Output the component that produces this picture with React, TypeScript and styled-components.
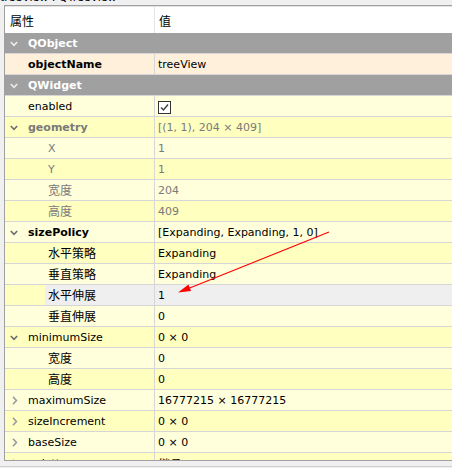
import React from "react";
import styled, { createGlobalStyle, css } from "styled-components";

const Global = createGlobalStyle`
  html, body { margin: 0; padding: 0; }
  body {
    background: #f0f0f0;
    font-family: "DejaVu Sans", "Noto Sans CJK SC", sans-serif;
    font-size: 11px;
    color: #000;
  }
`;

const LINE = "#d6d6d6";
const COLORS = {
  obj: { light: "#fff0dc", dark: "#ffe6bf" },
  widget: { light: "#ffffdc", dark: "#ffffc0" },
};

type Group = "obj" | "widget";
type Shade = "light" | "dark";

type CatRow = { kind: "cat"; label: string };
type PropRow = {
  kind: "prop";
  label: string;
  value?: string;
  level: number;
  group: Group;
  shade: Shade;
  bold?: boolean;
  gray?: boolean;
  expand?: "open" | "closed";
  hover?: boolean;
  checkbox?: boolean;
};
type RowData = CatRow | PropRow;

const rows: RowData[] = [
  { kind: "cat", label: "QObject" },
  { kind: "prop", label: "objectName", value: "treeView", level: 0, group: "obj", shade: "light", bold: true },
  { kind: "cat", label: "QWidget" },
  { kind: "prop", label: "enabled", level: 0, group: "widget", shade: "light", checkbox: true },
  { kind: "prop", label: "geometry", value: "[(1, 1), 204 × 409]", level: 0, group: "widget", shade: "dark", bold: true, gray: true, expand: "open" },
  { kind: "prop", label: "X", value: "1", level: 1, group: "widget", shade: "light", gray: true },
  { kind: "prop", label: "Y", value: "1", level: 1, group: "widget", shade: "dark", gray: true },
  { kind: "prop", label: "宽度", value: "204", level: 1, group: "widget", shade: "light", gray: true },
  { kind: "prop", label: "高度", value: "409", level: 1, group: "widget", shade: "dark", gray: true },
  { kind: "prop", label: "sizePolicy", value: "[Expanding, Expanding, 1, 0]", level: 0, group: "widget", shade: "light", bold: true, expand: "open" },
  { kind: "prop", label: "水平策略", value: "Expanding", level: 1, group: "widget", shade: "dark" },
  { kind: "prop", label: "垂直策略", value: "Expanding", level: 1, group: "widget", shade: "light" },
  { kind: "prop", label: "水平伸展", value: "1", level: 1, group: "widget", shade: "dark", hover: true },
  { kind: "prop", label: "垂直伸展", value: "0", level: 1, group: "widget", shade: "light" },
  { kind: "prop", label: "minimumSize", value: "0 × 0", level: 0, group: "widget", shade: "dark", expand: "open" },
  { kind: "prop", label: "宽度", value: "0", level: 1, group: "widget", shade: "light" },
  { kind: "prop", label: "高度", value: "0", level: 1, group: "widget", shade: "dark" },
  { kind: "prop", label: "maximumSize", value: "16777215 × 16777215", level: 0, group: "widget", shade: "light", expand: "closed" },
  { kind: "prop", label: "sizeIncrement", value: "0 × 0", level: 0, group: "widget", shade: "dark", expand: "closed" },
  { kind: "prop", label: "baseSize", value: "0 × 0", level: 0, group: "widget", shade: "light", expand: "closed" },
  { kind: "prop", label: "palette", value: "继承", level: 0, group: "widget", shade: "dark", expand: "closed" },
];

const Page = styled.div`
  position: relative;
  width: 452px;
  height: 468px;
  overflow: hidden;
  background: #f0f0f0;
`;

const Caption = styled.div`
  height: 5px;
  overflow: hidden;
`;

const CaptionText = styled.div`
  margin-top: -9px;
  line-height: 13px;
  white-space: nowrap;
`;

const Frame = styled.div`
  box-sizing: border-box;
  margin-left: 4px;
  height: 456px;
  border-top: 1px solid #a0a0a0;
  border-left: 1px solid #a0a0a0;
  border-bottom: 1px solid #a0a0a0;
  background: #fff;
  overflow: hidden;
`;

const Header = styled.div`
  display: flex;
  height: 26px;
  border-top: 1px solid #e3e3e3;
  background: #fff;
`;

const HeaderCell = styled.div<{ $first?: boolean }>`
  display: flex;
  align-items: center;
  box-sizing: border-box;
  padding-top: 1px;
  ${(p) =>
    p.$first
      ? css`
          width: 150px;
          padding-left: 5px;
          border-right: 1px solid #e5e5e5;
        `
      : css`
          flex: 1;
          padding-left: 4px;
        `}
`;

const Row = styled.div<{ $bg: string }>`
  display: flex;
  height: 20px;
  border-bottom: 1px solid ${LINE};
  background: ${(p) => p.$bg};
  white-space: nowrap;
`;

const NameCell = styled.div<{ $divider: boolean }>`
  display: flex;
  align-items: center;
  box-sizing: border-box;
  width: 150px;
  flex: none;
  height: 100%;
  ${(p) => p.$divider && css`border-right: 1px solid ${LINE};`}
`;

const Branch = styled.div<{ $width: number; $bg?: string }>`
  display: flex;
  align-items: center;
  width: ${(p) => p.$width}px;
  height: 100%;
  flex: none;
  padding: 1px 0 0 5px;
  box-sizing: border-box;
  background: ${(p) => p.$bg ?? "transparent"};
`;

const Label = styled.span<{ $bold?: boolean; $color: string }>`
  padding: 2px 0 0 3px;
  font-weight: ${(p) => (p.$bold ? 700 : 400)};
  color: ${(p) => p.$color};
  line-height: 18px;
`;

const ValueCell = styled.div<{ $color: string }>`
  display: flex;
  align-items: center;
  flex: 1;
  padding: 2px 0 0 3px;
  color: ${(p) => p.$color};
  line-height: 18px;
`;

const Cjk = styled.span`
  font-family: "Noto Sans CJK SC", sans-serif;
  font-size: 12px;
`;

const CheckBox = styled.span`
  box-sizing: border-box;
  display: inline-flex;
  align-items: center;
  justify-content: center;
  width: 13px;
  height: 13px;
  border: 1px solid #333;
  background: #fff;
`;

const Footer = styled.div`
  height: 5px;
  border-bottom: 1px solid #cfcfcf;
`;

const Overlay = styled.svg`
  position: absolute;
  left: 0;
  top: 0;
  pointer-events: none;
`;

const hasCjk = (s: string) => /[\u3400-\u9fff]/.test(s);
const Txt = ({ s }: { s: string }) => (hasCjk(s) ? <Cjk>{s}</Cjk> : <>{s}</>);

const Chevron = ({ open, color }: { open: boolean; color: string }) =>
  open ? (
    <svg width="8" height="6" viewBox="0 0 8 6">
      <polyline points="0.8,1 4,4.4 7.2,1" fill="none" stroke={color} strokeWidth="1.6" />
    </svg>
  ) : (
    <svg width="6" height="9" viewBox="0 0 6 9" style={{ marginLeft: 2 }}>
      <polyline points="1,0.8 4.4,4.5 1,8.2" fill="none" stroke={color} strokeWidth="1.6" />
    </svg>
  );

const TreeRow = ({ r }: { r: RowData }) => {
  if (r.kind === "cat") {
    return (
      <Row $bg="#a0a0a0">
        <NameCell $divider={false}>
          <Branch $width={20}>
            <Chevron open color="#ececec" />
          </Branch>
          <Label $bold $color="#ffffff">
            {r.label}
          </Label>
        </NameCell>
      </Row>
    );
  }
  const base = COLORS[r.group][r.shade];
  const text = r.gray ? "#7a7a7a" : "#000";
  const chevColor = r.expand === "closed" ? "#9a9a9a" : "#6e6e6e";
  return (
    <Row $bg={r.hover ? "#efefef" : base}>
      <NameCell $divider>
        <Branch $width={20 * (r.level + 1)} $bg={r.hover ? base : undefined}>
          {r.expand && <Chevron open={r.expand === "open"} color={chevColor} />}
        </Branch>
        <Label $bold={r.bold} $color={text}>
          <Txt s={r.label} />
        </Label>
      </NameCell>
      <ValueCell $color={text}>
        {r.checkbox ? (
          <CheckBox>
            <svg width="11" height="11" viewBox="0 0 11 11">
              <polyline points="2,5.5 4.5,8 9,2.5" fill="none" stroke="#444" strokeWidth="1.5" />
            </svg>
          </CheckBox>
        ) : (
          <Txt s={r.value ?? ""} />
        )}
      </ValueCell>
    </Row>
  );
};

export default function App() {
  return (
    <Page>
      <Global />
      <Caption>
        <CaptionText>treeView : QTreeView</CaptionText>
      </Caption>
      <Frame>
        <Header>
          <HeaderCell $first>
            <Cjk>属性</Cjk>
          </HeaderCell>
          <HeaderCell>
            <Cjk>值</Cjk>
          </HeaderCell>
        </Header>
        {rows.map((r, i) => (
          <TreeRow key={i} r={r} />
        ))}
      </Frame>
      <Footer />
      <Overlay width="452" height="468" viewBox="0 0 452 468">
        <line x1="329" y1="232" x2="186" y2="289.5" stroke="#ff0000" strokeWidth="1.2" />
        <polygon points="178,292.5 188.5,284.5 191,291" fill="#ff0000" />
      </Overlay>
    </Page>
  );
}
